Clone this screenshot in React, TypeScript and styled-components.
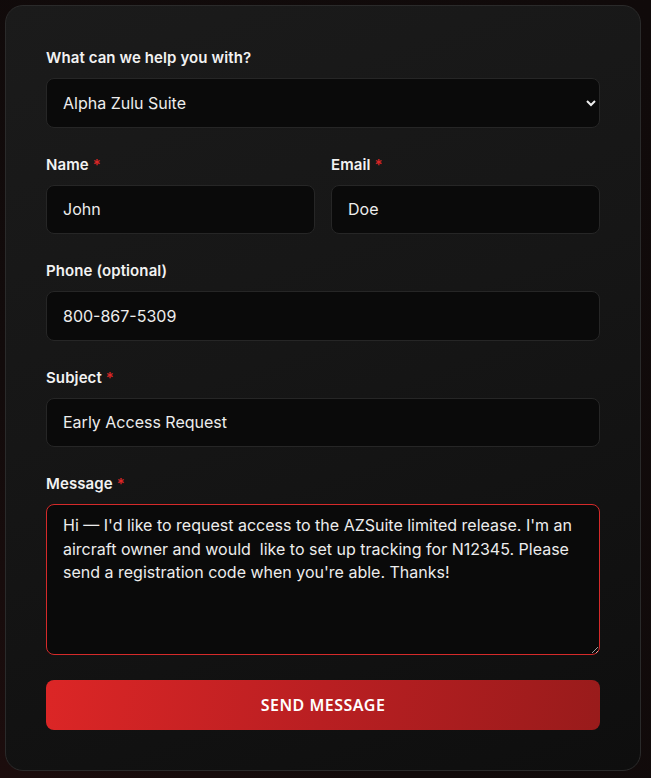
import React, { useState } from 'react';
import styled, { createGlobalStyle } from 'styled-components';

const GlobalStyle = createGlobalStyle`
  html, body {
    margin: 0;
    padding: 0;
    background: #120b0b;
    font-family: Inter, "Liberation Sans", sans-serif;
    color-scheme: dark;
  }
  * { box-sizing: border-box; }
`;

const Page = styled.div`
  min-height: 778px;
  padding: 5px 0 0 5px;
  background: radial-gradient(circle at 0% 100%, #1c0d0d 0%, #120b0b 40%, #100a0a 100%);
`;

const Card = styled.form`
  width: 636px;
  padding: 40px;
  border: 1px solid #2a2a2a;
  border-radius: 18px;
  background: linear-gradient(160deg, #1b1b1b 0%, #161616 45%, #0e0e0e 100%);
  display: flex;
  flex-direction: column;
  gap: 25px;
`;

const Field = styled.div`
  display: flex;
  flex-direction: column;
  gap: 8px;
`;

const Row = styled.div`
  display: grid;
  grid-template-columns: 1fr 1fr;
  gap: 16px;
`;

const Label = styled.label`
  font-size: 15px;
  line-height: 24px;
  font-weight: 600;
  letter-spacing: 0.1px;
  color: #f2f2f2;
`;

const Required = styled.span`
  color: #dc2626;
  margin-left: 4px;
`;

const controlBase = `
  width: 100%;
  background: #0a0a0a;
  border: 1px solid #262626;
  border-radius: 8px;
  color: #ededed;
  font-family: Inter, "Liberation Sans", sans-serif;
  font-size: 16px;
  outline: none;
`;

const Input = styled.input`
  ${controlBase}
  height: 49.5px;
  padding: 0 16px;
`;

const Select = styled.select`
  ${controlBase}
  height: 49.5px;
  padding: 0 4px 0 12px;
`;

const TextArea = styled.textarea<{ $active?: boolean }>`
  ${controlBase}
  height: 150.7px;
  padding: 9px 16px 12px;
  line-height: 23.5px;
  resize: vertical;
  border-color: ${p => (p.$active ? '#d52a2a' : '#262626')};
`;

const SendButton = styled.button`
  height: 50.7px;
  border: none;
  border-radius: 8px;
  background: linear-gradient(100deg, #dc2626 0%, #b91f22 50%, #991b1b 100%);
  color: #ffffff;
  font-family: "Noto Sans", "Open Sans", sans-serif;
  font-size: 16px;
  font-weight: 600;
  letter-spacing: 0.5px;
  text-transform: uppercase;
  cursor: pointer;
`;

const message =
  "Hi — I'd like to request access to the AZSuite limited release. I'm an aircraft owner and would  like to set up tracking for N12345. Please send a registration code when you're able. Thanks!";

export default function App() {
  const [topic, setTopic] = useState('azsuite');
  const [name, setName] = useState('John');
  const [email, setEmail] = useState('Doe');
  const [phone, setPhone] = useState('800-867-5309');
  const [subject, setSubject] = useState('Early Access Request');
  const [body, setBody] = useState(message);

  return (
    <>
      <GlobalStyle />
      <Page>
        <Card onSubmit={e => e.preventDefault()}>
          <Field>
            <Label htmlFor="topic">What can we help you with?</Label>
            <Select id="topic" value={topic} onChange={e => setTopic(e.target.value)}>
              <option value="azsuite">Alpha Zulu Suite</option>
              <option value="general">General Inquiry</option>
            </Select>
          </Field>

          <Row>
            <Field>
              <Label htmlFor="name">
                Name<Required>*</Required>
              </Label>
              <Input id="name" value={name} onChange={e => setName(e.target.value)} />
            </Field>
            <Field>
              <Label htmlFor="email">
                Email<Required>*</Required>
              </Label>
              <Input id="email" value={email} onChange={e => setEmail(e.target.value)} />
            </Field>
          </Row>

          <Field>
            <Label htmlFor="phone">Phone (optional)</Label>
            <Input id="phone" value={phone} onChange={e => setPhone(e.target.value)} />
          </Field>

          <Field>
            <Label htmlFor="subject">
              Subject<Required>*</Required>
            </Label>
            <Input id="subject" value={subject} onChange={e => setSubject(e.target.value)} />
          </Field>

          <Field>
            <Label htmlFor="message">
              Message<Required>*</Required>
            </Label>
            <TextArea
              id="message"
              $active
              value={body}
              onChange={e => setBody(e.target.value)}
            />
          </Field>

          <SendButton type="submit">Send Message</SendButton>
        </Card>
      </Page>
    </>
  );
}
